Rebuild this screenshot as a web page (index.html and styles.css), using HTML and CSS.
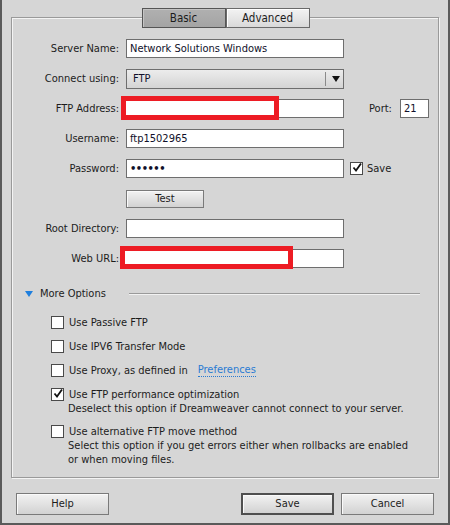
FILE: index.html
```html
<!DOCTYPE html>
<html>
<head>
<meta charset="utf-8">
<link rel="stylesheet" href="styles.css">
</head>
<body>
<div class="dialog">
  <div class="panel">
    <div class="tabs">
      <div class="tab tab-on">Basic</div>
      <div class="tab">Advanced</div>
    </div>
    <div class="form">
      <div class="row">
        <label class="lbl">Server Name:</label>
        <div class="field">Network Solutions Windows</div>
      </div>
      <div class="row">
        <label class="lbl">Connect using:</label>
        <div class="select"><span class="sel-text">FTP</span><span class="sel-arrow"></span></div>
      </div>
      <div class="row">
        <label class="lbl">FTP Address:</label>
        <div class="field redwrap"><span class="redbox redbox-ftp"></span></div>
        <label class="port-lbl">Port:</label>
        <div class="field port">21</div>
      </div>
      <div class="row">
        <label class="lbl">Username:</label>
        <div class="field">ftp1502965</div>
      </div>
      <div class="row">
        <label class="lbl">Password:</label>
        <div class="field pw">&#8226;&#8226;&#8226;&#8226;&#8226;&#8226;</div>
        <span class="cb cb-on save-cb"><svg viewBox="0 0 12 12" width="12" height="12"><path d="M2.5 5.5 L5 8.5 L10 1.5" fill="none" stroke="#111" stroke-width="1.8"/></svg></span>
        <span class="save-lbl">Save</span>
      </div>
      <div class="row">
        <span class="lbl"></span>
        <div class="btn test">Test</div>
      </div>
      <div class="row">
        <label class="lbl">Root Directory:</label>
        <div class="field"></div>
      </div>
      <div class="row">
        <label class="lbl">Web URL:</label>
        <div class="field redwrap"><span class="redbox redbox-url"></span></div>
      </div>
    </div>
    <div class="more">
      <span class="tri"></span>
      <span class="more-text">More Options</span>
      <span class="rule"></span>
    </div>
    <div class="opts">
      <div class="opt"><span class="cb"></span><span>Use Passive FTP</span></div>
      <div class="opt"><span class="cb"></span><span>Use IPV6 Transfer Mode</span></div>
      <div class="opt"><span class="cb"></span><span>Use Proxy, as defined in</span><span class="link">Preferences</span></div>
      <div class="optgrp">
        <div class="opt"><span class="cb cb-on"><svg viewBox="0 0 12 12" width="12" height="12"><path d="M2.5 5.5 L5 8.5 L10 1.5" fill="none" stroke="#111" stroke-width="1.8"/></svg></span><span>Use FTP performance optimization</span></div>
        <div class="desc">Deselect this option if Dreamweaver cannot connect to your server.</div>
      </div>
      <div class="optgrp alt">
        <div class="opt"><span class="cb"></span><span>Use alternative FTP move method</span></div>
        <div class="desc">Select this option if you get errors either when rollbacks are enabled<br>or when moving files.</div>
      </div>
    </div>
  </div>
  <div class="footer">
    <div class="btn fbtn">Help</div>
    <div class="spacer"></div>
    <div class="btn fbtn default">Save</div>
    <div class="btn fbtn">Cancel</div>
  </div>
</div>
</body>
</html>
```
FILE: styles.css
```css
html, body {
  margin: 0;
  padding: 0;
}
body {
  width: 450px;
  height: 525px;
  background: #d6d6d6;
  font-family: "DejaVu Sans Condensed", "DejaVu Sans", sans-serif;
  font-size: 11px;
  color: #1c1c1c;
  overflow: hidden;
}
.dialog {
  box-sizing: border-box;
  width: 450px;
  height: 525px;
  border-left: 2px solid #5a5a5a;
  border-right: 2px solid #5a5a5a;
  border-bottom: 2px solid #5a5a5a;
  padding-top: 17px;
}
.panel {
  box-sizing: border-box;
  margin-left: 9px;
  width: 428px;
  height: 461px;
  border: 1px solid #9a9a9a;
  box-shadow: inset 1px 1px 0 #f4f4f4, 1px 1px 0 #f4f4f4;
}
.tabs {
  display: flex;
  justify-content: center;
  margin-top: -10px;
  padding-left: 1px;
}
.tab {
  box-sizing: border-box;
  width: 84px;
  height: 20px;
  line-height: 18px;
  text-align: center;
  font-size: 11.5px;
  border: 1px solid #6a6a6a;
  background: linear-gradient(#f3f3f3, #d9d9d9);
  box-shadow: inset 1px 1px 0 #fff;
}
.tab-on {
  border-color: #555;
  background: linear-gradient(#b0b0b0, #a4a4a4);
  box-shadow: inset 1px 1px 0 #c4c4c4;
}
.form {
  display: flex;
  flex-direction: column;
  gap: 11px;
  margin-top: 11px;
}
.row {
  display: flex;
  align-items: center;
  height: 19px;
}
.lbl {
  width: 107px;
  text-align: right;
  padding-right: 7px;
  flex: none;
}
.field {
  box-sizing: border-box;
  width: 218px;
  height: 19px;
  border: 1px solid #6e6e6e;
  background: #fff;
  padding-left: 3px;
  line-height: 17px;
  color: #10102a;
  position: relative;
}
.pw {
  font-weight: bold;
  letter-spacing: -0.5px;
}
.select {
  box-sizing: border-box;
  width: 218px;
  height: 20px;
  border: 1px solid #6e6e6e;
  background: linear-gradient(#ececec, #d4d4d4);
  display: flex;
  align-items: center;
  color: #10102a;
}
.sel-text {
  flex: 1;
  padding-left: 6px;
}
.sel-arrow {
  width: 17px;
  height: 14px;
  border-left: 1px solid #8a8a8a;
  position: relative;
}
.sel-arrow::after {
  content: "";
  position: absolute;
  left: 6px;
  top: 4px;
  border-left: 4px solid transparent;
  border-right: 4px solid transparent;
  border-top: 6px solid #111;
}
.redwrap {
  position: relative;
}
.redbox {
  position: absolute;
  box-sizing: border-box;
  border: 5px solid #ed1c24;
  background: #fff;
}
.redbox-ftp {
  left: -6px;
  top: -4px;
  width: 158px;
  height: 24px;
}
.redbox-url {
  left: -7px;
  top: -4px;
  width: 173px;
  height: 23px;
}
.port-lbl {
  margin-left: 25px;
  width: 31px;
}
.port {
  width: 29px;
  padding-left: 3px;
}
.cb {
  box-sizing: border-box;
  width: 13px;
  height: 13px;
  border: 1px solid #4a4a4a;
  background: #fff;
  flex: none;
  display: inline-block;
  position: relative;
}
.cb svg {
  position: absolute;
  left: 0;
  top: -1px;
}
.save-cb {
  margin-left: 6px;
}
.save-lbl {
  margin-left: 4px;
}
.btn {
  box-sizing: border-box;
  border: 1px solid #7a7a7a;
  background: linear-gradient(#f2f2f2, #d2d2d2);
  box-shadow: inset 1px 1px 0 #fafafa;
  text-align: center;
}
.test {
  width: 78px;
  height: 18px;
  line-height: 16px;
}
.more {
  display: flex;
  align-items: center;
  height: 15px;
  margin-top: 18px;
  padding-left: 13px;
}
.tri {
  width: 0;
  height: 0;
  border-left: 4px solid transparent;
  border-right: 4px solid transparent;
  border-top: 6px solid #1f7fde;
}
.more-text {
  margin-left: 7px;
}
.rule {
  margin-left: auto;
  margin-right: 18px;
  width: 291px;
  height: 1px;
  background: #9a9a9a;
  box-shadow: 0 1px 0 #f2f2f2;
}
.opts {
  display: flex;
  flex-direction: column;
  gap: 8px;
  margin-top: 13px;
  padding-left: 39px;
}
.opt {
  display: flex;
  align-items: center;
  height: 16px;
}
.opt .cb {
  margin-right: 5px;
}
.link {
  margin-left: 10px;
  color: #2a7bd3;
  border-bottom: 1px dotted #2a7bd3;
  line-height: 13px;
}
.desc {
  padding-left: 17px;
  line-height: 14px;
}
.alt {
  margin-top: -1px;
}
.footer {
  display: flex;
  align-items: center;
  margin-top: 15px;
  padding-left: 14px;
}
.spacer {
  width: 125px;
}
.fbtn {
  width: 93px;
  height: 22px;
  line-height: 20px;
  margin-right: 7px;
}
.default {
  border: 2px solid #4f4f4f;
  line-height: 18px;
}
```
